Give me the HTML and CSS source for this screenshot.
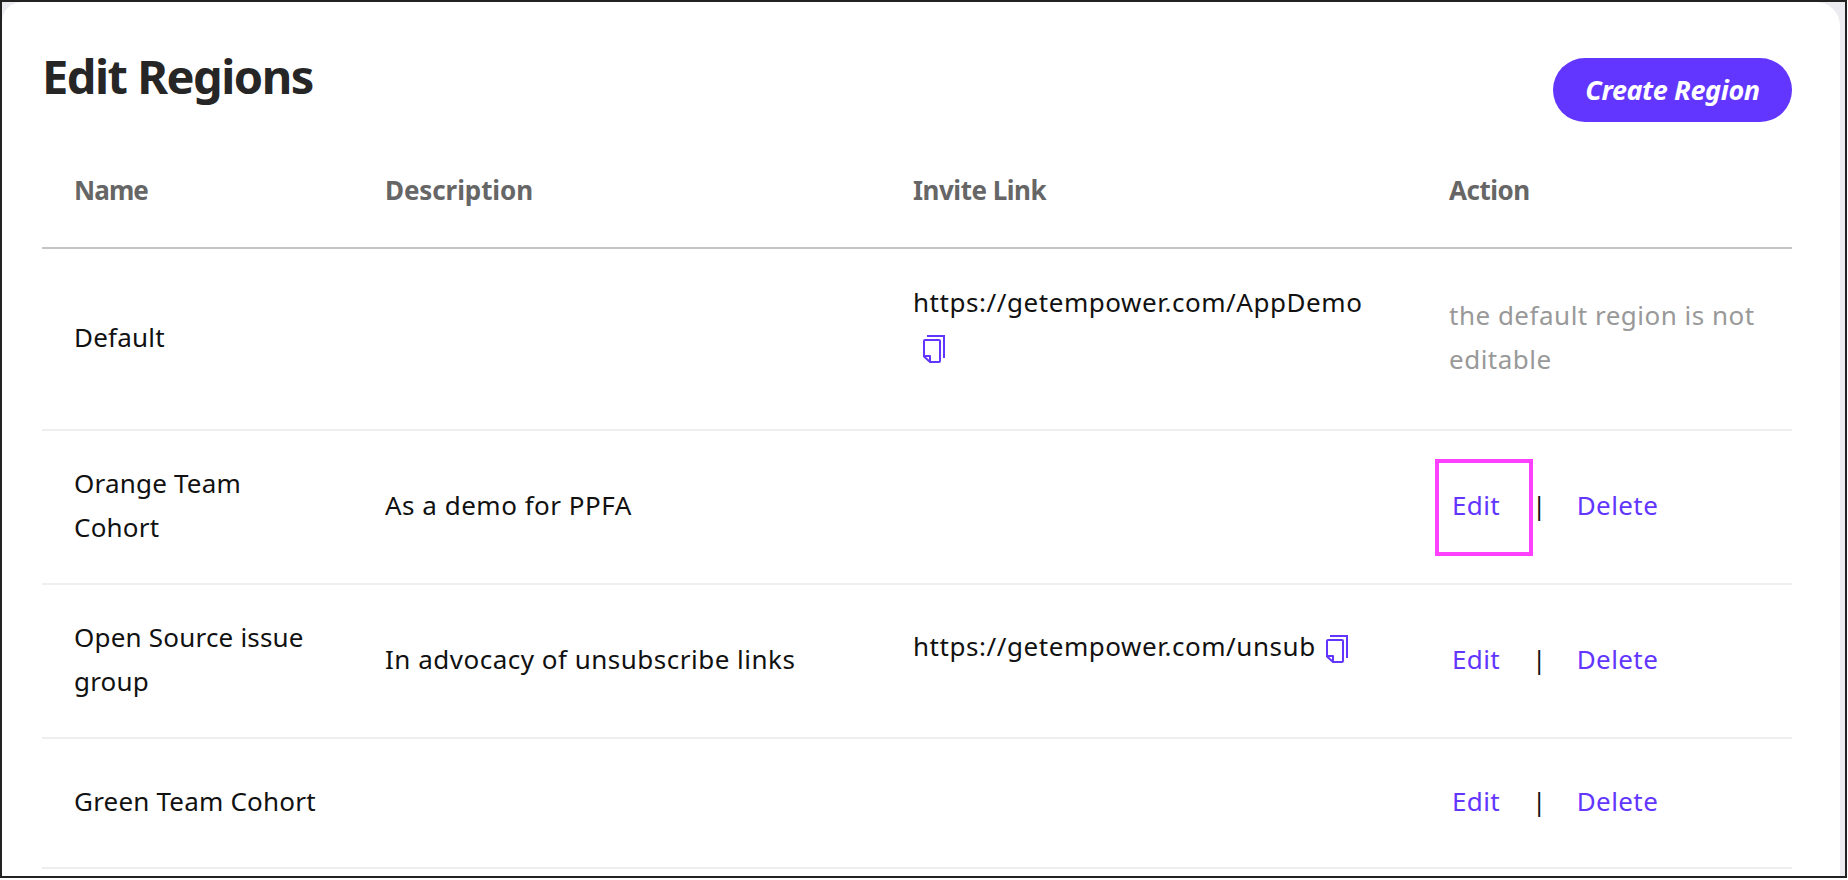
FILE: index.html
```html
<!DOCTYPE html>
<html lang="en">
<head>
  <meta charset="UTF-8" />
  <meta name="viewport" content="width=device-width, initial-scale=1.0" />
  <title>Edit Regions</title>
  <link rel="stylesheet" href="styles.css">
</head>
<body>
  <svg width="0" height="0" class="sprite">
    <symbol id="copy" viewBox="0 0 22 28">
      <path d="M4 1h17v22" fill="none" stroke="currentColor" stroke-width="2"/>
      <path d="M7 27h9a1 1 0 0 0 1-1V6a1 1 0 0 0-1-1H2a1 1 0 0 0-1 1v15.500L7 27zM1 21h6v6" fill="none" stroke="currentColor" stroke-width="2" stroke-linejoin="round"/>
    </symbol>
  </svg>

  <div class="frame">
    <div class="card">
      <div class="heading">
        <h1>Edit Regions</h1>
        <button class="create-btn">Create Region</button>
      </div>

      <table>
        <thead>
          <tr>
            <th class="col-name">Name</th>
            <th class="col-desc">Description</th>
            <th class="col-link">Invite Link</th>
            <th class="col-action">Action</th>
          </tr>
        </thead>
        <tbody>
          <tr class="row-default">
            <td class="name">Default</td>
            <td></td>
            <td class="url link-first">https://getempower.com/AppDemo<a class="copy" href="#"><svg><use href="#copy"/></svg></a></td>
            <td class="muted">the default region is not editable</td>
          </tr>
          <tr class="row-tall">
            <td class="name">Orange Team Cohort</td>
            <td>As a demo for PPFA</td>
            <td class="url"></td>
            <td>
              <div class="actions">
                <a class="edit highlighted" href="#">Edit</a>
                <span class="sep">|</span>
                <a href="#">Delete</a>
              </div>
            </td>
          </tr>
          <tr class="row-tall">
            <td class="name">Open Source issue group</td>
            <td>In advocacy of unsubscribe links</td>
            <td class="url link-top">https://getempower.com/unsub<a class="copy" href="#"><svg><use href="#copy"/></svg></a></td>
            <td>
              <div class="actions">
                <a class="edit" href="#">Edit</a>
                <span class="sep">|</span>
                <a href="#">Delete</a>
              </div>
            </td>
          </tr>
          <tr class="row-short">
            <td class="name">Green Team Cohort</td>
            <td></td>
            <td class="url"></td>
            <td>
              <div class="actions">
                <a class="edit" href="#">Edit</a>
                <span class="sep">|</span>
                <a href="#">Delete</a>
              </div>
            </td>
          </tr>
        </tbody>
      </table>
    </div>
  </div>
</body>
</html>
```

FILE: styles.css
```css
html, body {
  margin: 0;
  height: 880px;
  overflow: hidden;
  background: #fff;
}
body {
  font-family: "Noto Sans", "Open Sans", Arial, sans-serif;
  color: #111;
}
.sprite {
  display: block;
}
.frame {
  box-sizing: border-box;
  width: 1847px;
  height: 878px;
  border: 2px solid #222;
  background: #ececf0;
  overflow: hidden;
}
.card {
  box-sizing: border-box;
  height: 100%;
  margin-right: 5px;
  padding: 0 48px 0 40px;
  background: #fff;
  border-radius: 20px 24px 0 0;
}
.heading {
  display: flex;
  justify-content: space-between;
  height: 146px;
}
h1 {
  margin: 44px 0 0;
  font-size: 47px;
  line-height: 60px;
  font-weight: 700;
  color: #262626;
  letter-spacing: -1.5px;
}
.create-btn {
  margin-top: 56px;
  width: 239px;
  height: 64px;
  padding: 0 0 2px;
  border: none;
  border-radius: 32px;
  background: #6236ff;
  color: #fff;
  font-family: inherit;
  font-size: 27px;
  font-weight: 700;
  font-style: italic;
  letter-spacing: -0.4px;
}
table {
  width: 1750px;
  border-collapse: collapse;
  table-layout: fixed;
  font-size: 26px;
  line-height: 44px;
}
th {
  height: 100px;
  padding: 0 0 16px 32px;
  box-sizing: border-box;
  text-align: left;
  font-weight: 700;
  color: #666;
  letter-spacing: -0.5px;
  border-bottom: 2px solid #c4c4c4;
}
.col-name { width: 311px; letter-spacing: -0.9px; }
.col-desc { width: 528px; letter-spacing: -0.1px; }
.col-link { width: 536px; }
td {
  padding: 0 0 4px 32px;
  letter-spacing: 0.5px;
  border-bottom: 2px solid #eee;
  vertical-align: middle;
}
td.name {
  padding-right: 29px;
  letter-spacing: 0.2px;
}
td.url {
  padding-right: 30px;
  letter-spacing: 0.55px;
}
.row-default { height: 182px; }
.row-tall { height: 154px; }
.row-short { height: 130px; }
.muted {
  color: #999;
}
td.link-first {
  vertical-align: top;
  padding-top: 31px;
}
td.link-top {
  vertical-align: top;
  padding-top: 39px;
}
.copy {
  display: inline-block;
  vertical-align: middle;
  margin-left: 10px;
  color: #6236ff;
}
.copy svg {
  display: block;
  width: 22px;
  height: 28px;
}
.actions {
  display: flex;
  align-items: center;
  padding-left: 3px;
  letter-spacing: 0.4px;
  color: #6236ff;
}
.actions a {
  color: #6236ff;
  text-decoration: none;
}
.edit {
  width: 48px;
  margin-right: 32px;
}
.sep {
  color: #111;
  margin-right: 30px;
}
.highlighted {
  position: relative;
}
.highlighted::after {
  content: "";
  position: absolute;
  left: -17px;
  top: -24px;
  width: 90px;
  height: 89px;
  border: 4px solid #ff40ff;
}
```
